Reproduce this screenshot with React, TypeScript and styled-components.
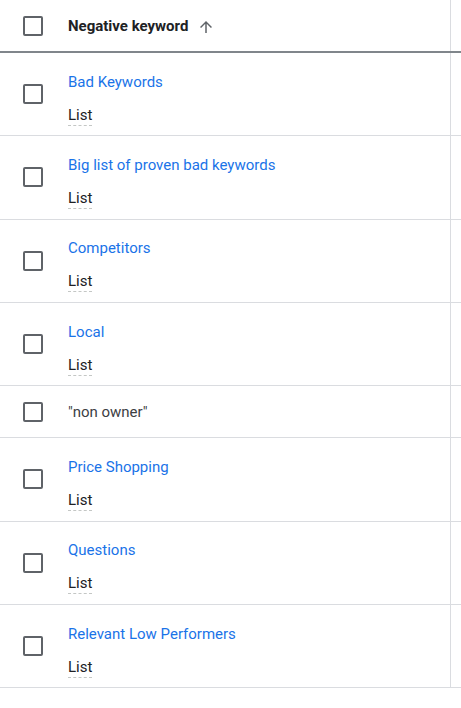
import React from 'react'
import styled, { createGlobalStyle } from 'styled-components'

const GlobalStyle = createGlobalStyle`
	body {
		margin: 0;
		background: #fff;
		font-family: Roboto, 'Noto Sans', Arial, sans-serif;
		-webkit-font-smoothing: antialiased;
	}
`

const rows = [
	{ name: 'Bad Keywords', list: true },
	{ name: 'Big list of proven bad keywords', list: true },
	{ name: 'Competitors', list: true },
	{ name: 'Local', list: true },
	{ name: '"non owner"', list: false },
	{ name: 'Price Shopping', list: true },
	{ name: 'Questions', list: true },
	{ name: 'Relevant Low Performers', list: true }
]

export default function App() {
	return (
		<>
			<GlobalStyle />
			<Table>
				<HeaderRow>
					<CheckCell>
						<Checkbox />
					</CheckCell>
					<NameCell $header>
						<HeaderLabel>Negative keyword</HeaderLabel>
						<SortIcon viewBox="0 0 24 24">
							<path d="M4 12l1.41 1.41L11 7.83V20h2V7.83l5.58 5.59L20 12l-8-8-8 8z" />
						</SortIcon>
					</NameCell>
					<RestCell />
				</HeaderRow>
				{rows.map(row => (
					<Row key={row.name} $tall={row.list}>
						<CheckCell>
							<Checkbox />
						</CheckCell>
						<NameCell>
							{row.list ? (
								<Stack>
									<KeywordLink>{row.name}</KeywordLink>
									<TypeLabel>List</TypeLabel>
								</Stack>
							) : (
								<PlainKeyword>{row.name}</PlainKeyword>
							)}
						</NameCell>
						<RestCell />
					</Row>
				))}
			</Table>
		</>
	)
}

const Table = styled.div`
	width: 461px;
	overflow: hidden;
`

const HeaderRow = styled.div`
	display: grid;
	grid-template-columns: 56px 395px 1fr;
	height: 51px;
	border-bottom: 2px solid #80868b;
`

const Row = styled.div<{ $tall: boolean }>`
	display: grid;
	grid-template-columns: 56px 395px 1fr;
	height: ${p => (p.$tall ? '82.33px' : '51px')};
	border-bottom: 1px solid #dadce0;
`

const CheckCell = styled.div`
	display: flex;
	align-items: center;
	padding-left: 23px;
`

const Checkbox = styled.div`
	box-sizing: border-box;
	width: 20px;
	height: 20px;
	border: 2px solid #5f6368;
	border-radius: 2px;
`

const NameCell = styled.div<{ $header?: boolean }>`
	display: flex;
	align-items: center;
	padding-left: 12px;
	border-right: 1px solid #dadce0;
	gap: 9px;
	${p => (p.$header ? 'padding-top: 1px;' : '')}
`

const RestCell = styled.div``

const HeaderLabel = styled.span`
	font-size: 15px;
	font-weight: 700;
	color: #202124;
`

const SortIcon = styled.svg`
	width: 18px;
	height: 18px;
	fill: #5f6368;
	margin-top: 1px;
`

const Stack = styled.div`
	display: flex;
	flex-direction: column;
	align-items: flex-start;
	gap: 14px;
	padding-top: 9px;
`

const KeywordLink = styled.span`
	font-size: 15px;
	line-height: 20px;
	color: #1a73e8;
`

const TypeLabel = styled.span`
	font-size: 15px;
	line-height: 19px;
	color: #202124;
	border-bottom: 1px dashed #c4c7c5;
`

const PlainKeyword = styled.span`
	font-size: 15px;
	line-height: 20px;
	color: #3c4043;
`
